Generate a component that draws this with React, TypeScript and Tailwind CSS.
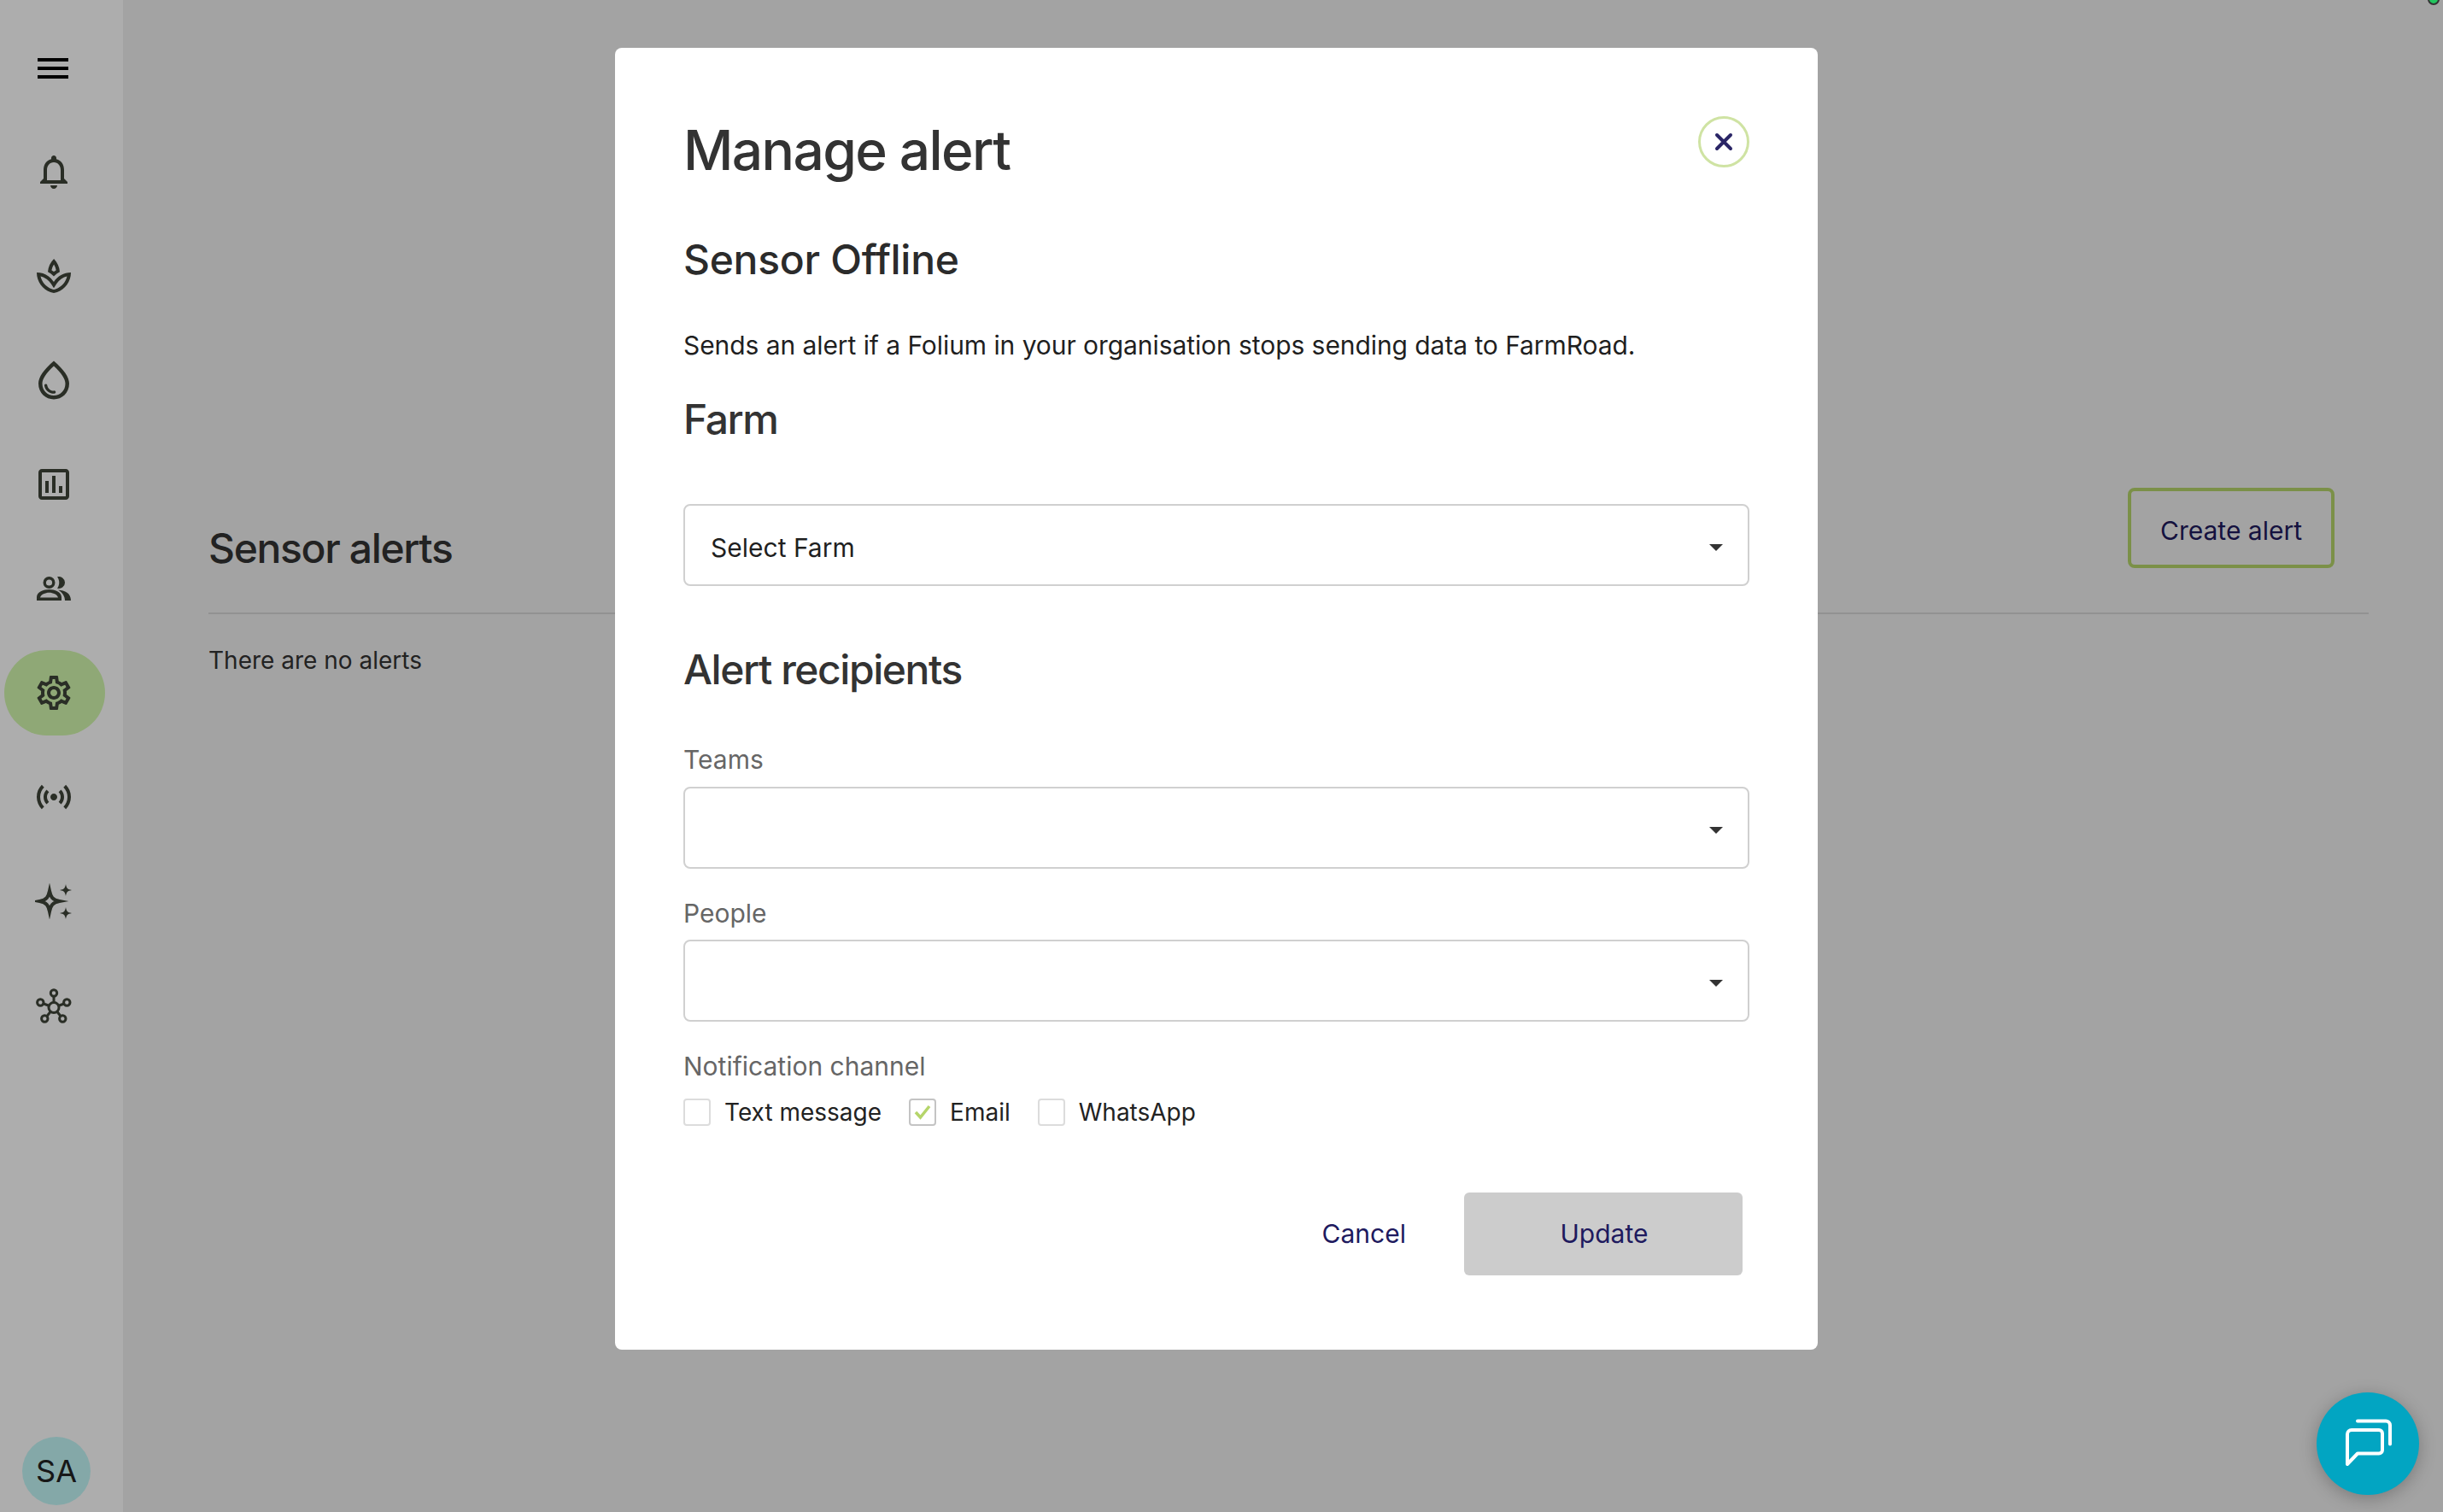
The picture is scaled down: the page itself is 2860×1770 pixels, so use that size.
import React from 'react';
import {
  MdOutlineNotifications,
  MdOutlineSpa,
  MdOutlineWaterDrop,
  MdOutlineAssessment,
  MdOutlineSettings,
  MdOutlineSensors,
} from 'react-icons/md';

const People = () => (
  <svg width="40" height="28" viewBox="0 0 40 28" fill="currentColor">
    <circle cx="14.5" cy="7" r="5.300" fill="none" stroke="currentColor" strokeWidth="3.400" />
    <path d="M24 .3A7 7 0 1 1 24 13.700C27 10 27 4 24 .3Z" />
    <path fillRule="evenodd" d="M0 28V24C0 18 8 15 14.500 15C21 15 29 18 29 24V28ZM4 24.500H25C24 21 19 18.800 14.500 18.800C10 18.800 5 21 4 24.500Z" />
    <path d="M25 15.500C33 16.500 40 19 40 28H33C33 23 30 18.500 25 15.500Z" />
  </svg>
);

const Sparkles = () => (
  <svg width="44" height="44" viewBox="0 0 44 44" fill="none">
    <path d="M17 10C18.500 17 20.500 20.500 28.500 22C20.500 23.500 18.500 27 17 34C15.500 27 13.500 23.500 5.500 22C13.500 20.500 15.500 17 17 10Z" stroke="currentColor" strokeWidth="4" strokeLinejoin="miter" strokeMiterlimit="8" />
    <path d="M36 2C37 7 38 8 43 9C38 10 37 11 36 16C35 11 34 10 29 9C34 8 35 7 36 2Z" fill="currentColor" />
    <path d="M36 29C37 34 38 35 43 36C38 37 37 38 36 43C35 38 34 37 29 36C34 35 35 34 36 29Z" fill="currentColor" />
  </svg>
);

const Hub = () => (
  <svg width="44" height="44" viewBox="0 0 44 44" fill="none" stroke="currentColor" strokeWidth="3">
    <circle cx="22" cy="24.500" r="6" />
    <circle cx="22" cy="7.500" r="3.700" />
    <circle cx="6.300" cy="18.500" r="3.700" />
    <circle cx="37.300" cy="18.500" r="3.700" />
    <circle cx="11.300" cy="37.500" r="3.700" />
    <circle cx="32.300" cy="37.500" r="3.700" />
    <path d="M22 11V19M10 20L17 22.500M34 20L27 22.500M14 34.500L18 29.500M30 34.500L26 29.500" />
  </svg>
);

const Caret = () => (
  <svg width="18" height="10" viewBox="0 0 18 10" className="text-[#333333]">
    <path d="M1 1h16l-8 8z" fill="currentColor" />
  </svg>
);

const navItems = [
  { key: 'alerts', icon: <MdOutlineNotifications size={48} /> },
  { key: 'crops', icon: <MdOutlineSpa size={48} /> },
  { key: 'water', icon: <MdOutlineWaterDrop size={54} /> },
  { key: 'reports', icon: <MdOutlineAssessment size={48} /> },
  { key: 'people', icon: <People /> },
  { key: 'settings', icon: <MdOutlineSettings size={48} />, active: true },
  { key: 'sensors', icon: <MdOutlineSensors size={48} /> },
  { key: 'insights', icon: <Sparkles /> },
  { key: 'network', icon: <Hub /> },
];

const SelectBox = ({ value }: { value?: string }) => (
  <div className="h-[96px] pt-[5px] flex items-center justify-between pl-[30px] pr-[28px] border-2 border-[#d0d0d0] rounded-[8px] text-[30px] text-[#1f1f1f]">
    <span className="mt-[2px]">{value}</span>
    <Caret />
  </div>
);

const Check = ({ label, checked }: { label: string; checked?: boolean }) => (
  <div className="flex items-center gap-[16px] text-[28px] leading-[32px] text-[#222222]">
    <span className={`w-[32px] h-[32px] rounded-[4px] border-2 flex items-center justify-center ${checked ? 'border-[#c4c4c4]' : 'border-[#dcdcdc]'}`}>
      {checked && (
        <svg width="22" height="20" viewBox="0 0 22 20" fill="none">
          <path d="M3 10l5.500 6L19 3" stroke="#b5d56a" strokeWidth="3.500" />
        </svg>
      )}
    </span>
    <span>{label}</span>
  </div>
);

export default function App() {
  return (
    <div className="relative w-[2860px] h-[1770px] overflow-hidden flex bg-[#f0f0f0] font-['Inter',sans-serif]">
      {/* Sidebar */}
      <aside className="w-[144px] h-full bg-white flex flex-col">
        <div className="h-[139.5px] pt-[68px] pl-[44px] shrink-0">
          <div className="w-[36px] h-[24px] flex flex-col justify-between">
            <span className="h-[4px] bg-black" />
            <span className="h-[4px] bg-black" />
            <span className="h-[4px] bg-black" />
          </div>
        </div>
        {navItems.map((item) => (
          <div key={item.key} className="h-[122px] pl-[5px] flex items-center">
            <div className={`w-[118px] h-[100px] pr-[2px] rounded-[50px] flex items-center justify-center text-[#3f4539] ${item.active ? 'bg-[#d3f8ae]' : ''}`}>
              {item.icon}
            </div>
          </div>
        ))}
        <div className="mt-auto mb-[8px] ml-[26px] w-[80px] h-[80px] rounded-full bg-[#c3f8f8] flex items-center justify-center text-[36px] text-[#222222]">
          SA
        </div>
      </aside>

      {/* Page behind the dialog */}
      <main className="flex-1 pt-[571px] pl-[100px] pr-[87px]">
        <div className="h-[148px] flex justify-between items-start border-b-2 border-[#d8d8d8]">
          <h2 className="mt-[43px] text-[48px] leading-[56px] font-[450] tracking-[-1.35px] text-[#333333]">Sensor alerts</h2>
          <button className="mr-[40px] w-[242px] h-[94px] pt-[6px] rounded-[8px] border-[4px] border-[#b5d56a] text-[30px] text-[#1e1a5e]">
            Create alert
          </button>
        </div>
        <p className="mt-[34px] text-[28px] leading-[40px] text-[#333333]">There are no alerts</p>
      </main>

      {/* Dialog */}
      <div className="absolute inset-0 bg-black/32 flex justify-center items-start pt-[56px] pr-[12px]">
        <div className="w-[1408px] h-[1524px] bg-white rounded-[8px] px-[80px] pt-[88px]">
          <div className="flex justify-between items-start">
            <h1 className="text-[64px] leading-[64px] font-medium tracking-[-1.6px] text-[#333333]">Manage alert</h1>
            <button className="-mt-[8px] w-[60px] h-[60px] rounded-full border-[3px] border-[#cfe3a3] flex items-center justify-center text-[#2a2566]">
              <svg width="24" height="24" viewBox="0 0 24 24" fill="none" stroke="currentColor" strokeWidth="4" strokeLinecap="round">
                <path d="M4 4l16 16M20 4L4 20" />
              </svg>
            </button>
          </div>
          <h2 className="mt-[68px] text-[48px] leading-[56px] font-[450] tracking-[-0.3px] text-[#2b2b2b]">Sensor Offline</h2>
          <p className="mt-[52px] text-[30px] leading-[40px] tracking-[-0.07px] text-[#1f1f1f]">
            Sends an alert if a Folium in your organisation stops sending data to FarmRoad.
          </p>
          <h2 className="mt-[39px] text-[48px] leading-[56px] font-[450] tracking-[-1.45px] text-[#333333]">Farm</h2>
          <div className="mt-[71px]">
            <SelectBox value="Select Farm" />
          </div>
          <h2 className="mt-[70px] text-[48px] leading-[56px] font-[450] tracking-[-1.45px] text-[#333333]">Alert recipients</h2>
          <label className="block mt-[57px] text-[30px] leading-[40px] text-[#666666]">Teams</label>
          <div className="mt-[12px]">
            <SelectBox />
          </div>
          <label className="block mt-[32px] text-[30px] leading-[40px] text-[#666666]">People</label>
          <div className="mt-[11px]">
            <SelectBox />
          </div>
          <label className="block mt-[32px] text-[30px] leading-[40px] text-[#666666]">Notification channel</label>
          <div className="mt-[18px] flex gap-[32px]">
            <Check label="Text message" />
            <Check label="Email" checked />
            <Check label="WhatsApp" />
          </div>
          <div className="mt-[78px] pr-[8px] flex justify-end items-center gap-[68px]">
            <button className="text-[30px] text-[#1e1a5e]">Cancel</button>
            <button className="w-[326px] h-[97px] pl-[2px] rounded-[6px] bg-[#cccccc] text-[30px] text-[#1e1a5e]">Update</button>
          </div>
        </div>
      </div>

      {/* Chat launcher */}
      <button className="absolute left-[2712px] top-[1630px] w-[120px] h-[120px] rounded-full bg-[#02a5c2] shadow-[0_4px_20px_rgba(0,0,0,0.25)] flex items-center justify-center">
        <svg width="60" height="60" viewBox="0 0 60 60" fill="none" stroke="white" strokeWidth="4" strokeLinecap="round" strokeLinejoin="round">
          <path d="M18 3.500H51a5 5 0 0 1 5 5V30.500" />
          <path d="M11 14H43a4 4 0 0 1 4 4V37.500a4 4 0 0 1-4 4H18L6 54V19a5 5 0 0 1 5-5Z" />
        </svg>
      </button>

      {/* Status dot */}
      <span className="absolute left-[2842px] -top-[8px] w-[14px] h-[14px] rounded-full bg-[#22c55e] border-2 border-[#333333]" />
    </div>
  );
}
